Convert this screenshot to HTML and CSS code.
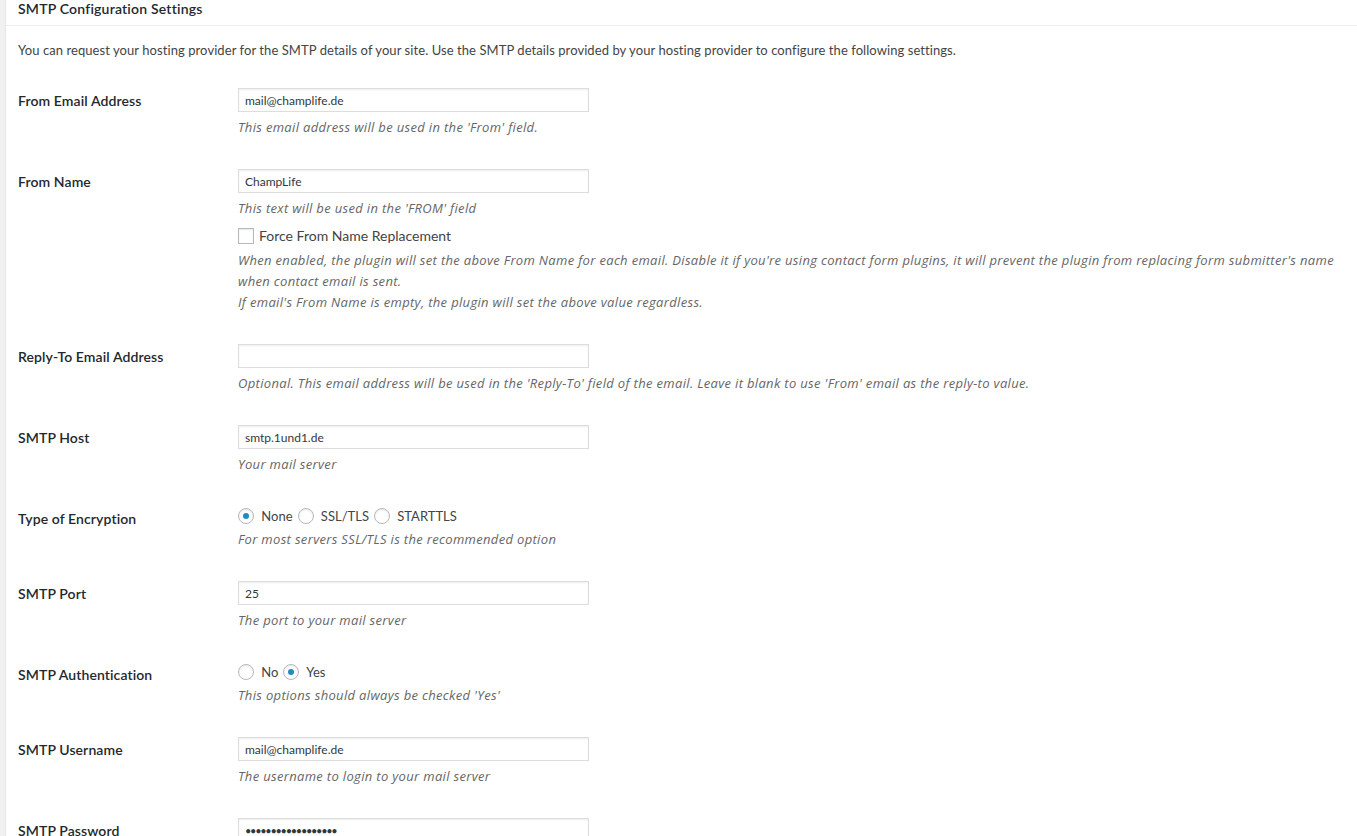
FILE: index.html
```html
<!DOCTYPE html>
<html lang="en">
<head>
    <meta charset="UTF-8">
    <title>SMTP Configuration Settings</title>
    <link rel="stylesheet" href="styles.css">
</head>
<body>
    <div class="postbox">
        <h3 class="hndle">SMTP Configuration Settings</h3>
        <div class="inside">
            <p class="intro">You can request your hosting provider for the SMTP details of your site. Use the SMTP details provided by your hosting provider to configure the following settings.</p>

            <table class="form-table">
                <tr>
                    <th>From Email Address</th>
                    <td>
                        <input type="text" class="regular-text" value="mail@champlife.de">
                        <p class="description">This email address will be used in the 'From' field.</p>
                    </td>
                </tr>
                <tr>
                    <th>From Name</th>
                    <td>
                        <input type="text" class="regular-text" value="ChampLife">
                        <p class="description">This text will be used in the 'FROM' field</p>
                        <label class="check-line"><input type="checkbox" class="check"> Force From Name Replacement</label>
                        <p class="description description-long">When enabled, the plugin will set the above From Name for each email. Disable it if you're using contact form plugins, it will prevent the plugin from replacing form submitter's name<br>when contact email is sent.<br>If email's From Name is empty, the plugin will set the above value regardless.</p>
                    </td>
                </tr>
                <tr>
                    <th>Reply-To Email Address</th>
                    <td>
                        <input type="text" class="regular-text" value="">
                        <p class="description">Optional. This email address will be used in the 'Reply-To' field of the email. Leave it blank to use 'From' email as the reply-to value.</p>
                    </td>
                </tr>
                <tr>
                    <th>SMTP Host</th>
                    <td>
                        <input type="text" class="regular-text" value="smtp.1und1.de">
                        <p class="description">Your mail server</p>
                    </td>
                </tr>
                <tr>
                    <th>Type of Encryption</th>
                    <td>
                        <div class="radios">
                            <label><input type="radio" class="radio" name="enc" checked> None</label>
                            <label><input type="radio" class="radio" name="enc"> SSL/TLS</label>
                            <label><input type="radio" class="radio" name="enc"> STARTTLS</label>
                        </div>
                        <p class="description">For most servers SSL/TLS is the recommended option</p>
                    </td>
                </tr>
                <tr>
                    <th>SMTP Port</th>
                    <td>
                        <input type="text" class="regular-text" value="25">
                        <p class="description">The port to your mail server</p>
                    </td>
                </tr>
                <tr>
                    <th>SMTP Authentication</th>
                    <td>
                        <div class="radios">
                            <label><input type="radio" class="radio" name="auth"> No</label>
                            <label><input type="radio" class="radio" name="auth" checked> Yes</label>
                        </div>
                        <p class="description">This options should always be checked 'Yes'</p>
                    </td>
                </tr>
                <tr>
                    <th>SMTP Username</th>
                    <td>
                        <input type="text" class="regular-text" value="mail@champlife.de">
                        <p class="description">The username to login to your mail server</p>
                    </td>
                </tr>
                <tr>
                    <th>SMTP Password</th>
                    <td>
                        <input type="password" class="regular-text password-text" value="champlifepassword1">
                        <p class="description">The password to login to your mail server</p>
                    </td>
                </tr>
            </table>
        </div>
    </div>
</body>
</html>
```

FILE: styles.css
```css
* {
    box-sizing: border-box;
}

html, body {
    margin: 0;
    padding: 0;
    overflow: hidden;
}

body {
    background: #f1f1f1;
    color: #444;
    font-family: 'Segoe UI', 'Lato', 'Liberation Sans', sans-serif;
    font-size: 13px;
}

.postbox {
    margin-left: 5px;
    background: #fff;
    border-left: 1px solid #e5e5e5;
    min-height: 900px;
}

.hndle {
    margin: 0;
    padding: 0 12px 7px;
    font-size: 14px;
    font-weight: 600;
    line-height: 18px;
    letter-spacing: 0.2px;
    color: #23282d;
    border-bottom: 1px solid #eee;
}

.inside {
    padding: 0 12px 12px;
}

.intro {
    margin: 14px 0 12px;
    line-height: 20px;
    letter-spacing: 0.07px;
}

.form-table {
    width: 100%;
    border-collapse: collapse;
}

.form-table th {
    width: 210px;
    padding: 20px 10px 20px 0;
    text-align: left;
    vertical-align: top;
    font-size: 14px;
    font-weight: 600;
    line-height: 18px;
    letter-spacing: 0.1px;
    color: #23282d;
}

.form-table td {
    padding: 15px 10px;
    vertical-align: top;
    line-height: 1.3;
}

.regular-text {
    display: block;
    width: 351px;
    height: 24px;
    margin: 1px 0;
    padding: 0 6px;
    border: 1px solid #ddd;
    box-shadow: inset 0 1px 2px rgba(0, 0, 0, 0.07);
    background: #fff;
    color: #32373c;
    font-family: inherit;
    font-size: 12px;
    outline: none;
}

.password-text {
    letter-spacing: -1.3px;
    font-size: 11px;
}

.description {
    margin: 5px 0 0;
    font-family: 'Open Sans', 'Segoe UI', sans-serif;
    font-size: 13px;
    line-height: 21px;
    letter-spacing: 0.33px;
    font-style: italic;
    color: #666;
}

.description-long {
    margin-top: 3px;
    white-space: nowrap;
}

.check-line {
    display: flex;
    align-items: center;
    height: 22px;
    margin-top: 6px;
    font-size: 14px;
    color: #444;
}

.radios {
    display: flex;
    align-items: center;
    height: 20px;
    margin-top: 1px;
    font-size: 13px;
    color: #444;
}

.radios + .description {
    margin-top: 3px;
}

.radios label {
    display: flex;
    align-items: center;
    margin-right: 5px;
    white-space: pre;
}

.check, .radio {
    appearance: none;
    -webkit-appearance: none;
    width: 16px;
    height: 16px;
    margin: 0 4px 0 0;
    border: 1px solid #b4b9be;
    background: #fff;
    box-shadow: inset 0 1px 2px rgba(0, 0, 0, 0.1);
    flex-shrink: 0;
}

.check {
    margin-right: 5px;
}

.radio {
    border-radius: 50%;
    position: relative;
}

.radio:checked::before {
    content: '';
    position: absolute;
    top: 4px;
    left: 4px;
    width: 6px;
    height: 6px;
    border-radius: 50%;
    background: #1e8cbe;
}
```
